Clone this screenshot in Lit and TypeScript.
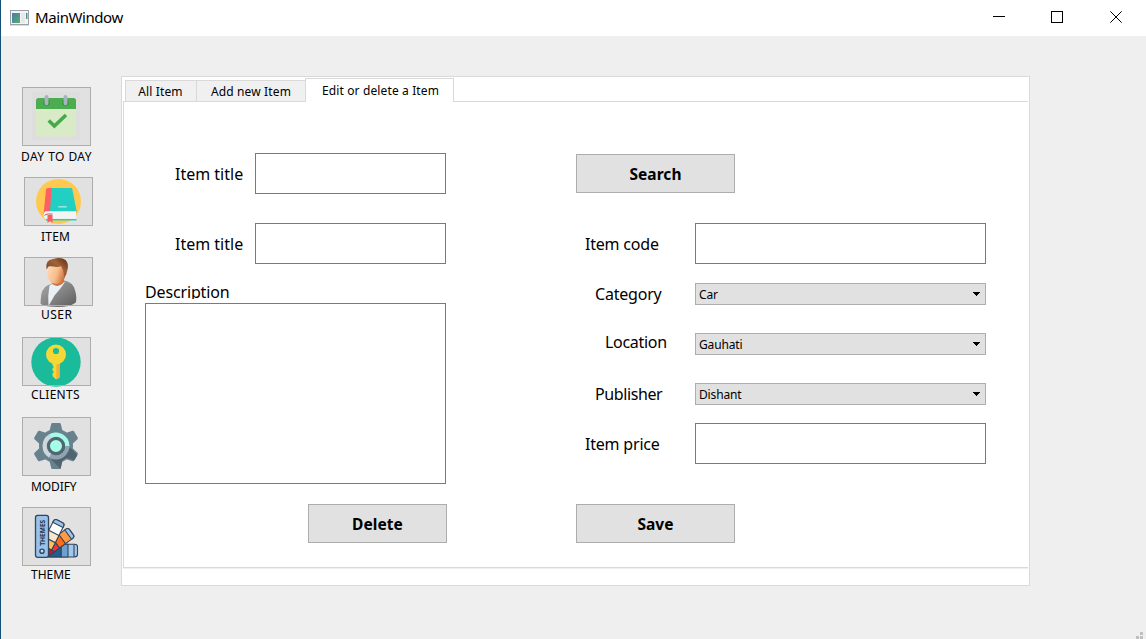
import { LitElement, html, svg, css } from "lit";
import { customElement, property } from "lit/decorators.js";

const dayIcon = svg`
  <rect x="32" y="92" width="48" height="48" fill="#dedede"/>
  <path d="M36 104h40v30.500q0 2-2 2H38q-2 0-2-2z" fill="#d9ebc6"/>
  <path d="M36 109v-8.500q0-2.500 2.500-2.500h35q2.500 0 2.500 2.500v8.500z" fill="#4bad50"/>
  <circle cx="46.500" cy="102.500" r="3.200" fill="#398e3d"/><circle cx="65.500" cy="102.500" r="3.200" fill="#398e3d"/>
  <path d="M46.500 97v6.300M65.500 97v6.300" stroke="#a5b4bd" stroke-width="4" stroke-linecap="round"/>
  <path d="M48.700 120.500l5.700 5.600L66 115" fill="none" stroke="#46a84b" stroke-width="3.500"/>`;

const itemIcon = svg`
  <circle cx="58.500" cy="201.500" r="22.500" fill="#ffc84f"/>
  <path d="M47.500 188H71q1 0 1.300 1.300L76.800 212H48z" fill="#21d0c3"/>
  <path d="M48 188h3.700L50 211l-6.500 4L46 190q.2-2 2-2z" fill="#ff5e65"/>
  <path d="M45.500 211.300H76v8H46q-2.500-1-2.500-4t2-4z" fill="#f5f4f4"/>
  <path d="M49 211.500H76.300" stroke="#ddd" stroke-width="1"/>
  <path d="M46 219.700h30.500" stroke="#21cfc2" stroke-width="1.500"/>
  <path d="M47.500 215h5v8l-2.500-2-2.500 2z" fill="#ff5a62"/>
  <path d="M44.500 215.500q1-1.500 4-1.500h4" stroke="#c9545d" stroke-width="1" fill="none"/>
  <path d="M58.300 206.800h8.500" stroke="#9debe4" stroke-width="1.400"/>`;

const userIcon = svg`
  <defs>
    <linearGradient id="suit" x1="0" x2="1" y1="0" y2="1"><stop offset="0" stop-color="#aaa"/><stop offset=".5" stop-color="#858585"/><stop offset="1" stop-color="#5c5c5c"/></linearGradient>
    <linearGradient id="skin" x1="0" x2="1" y1=".2" y2=".6"><stop offset="0" stop-color="#ffdcb8"/><stop offset=".55" stop-color="#f7bd8c"/><stop offset="1" stop-color="#c96c38"/></linearGradient>
    <linearGradient id="hair" x1="0" x2="1" y1="1" y2="0"><stop offset="0" stop-color="#6c3516"/><stop offset=".6" stop-color="#a0623a"/><stop offset="1" stop-color="#5a2a10"/></linearGradient>
  </defs>
  <path d="M40.600 301q.2-13 7.500-16l16-4.500q9 1.500 11 10 2 7 .7 12Q70 307 58 307q-13 0-17.400-3z" fill="url(#suit)"/>
  <path d="M49.500 285.500l3-1.500 12.500-2-5 7-5.500 6.500L48.500 306q-1-10 1-20.500z" fill="#e9f1f4"/>
  <path d="M51.500 278h12.500v3.800q-2.500 3.700-7 4.200-3.500-.3-5.500-3z" fill="#cc7341"/>
  <ellipse cx="56.300" cy="273.500" rx="9.200" ry="10.600" fill="url(#skin)"/>
  <path d="M46.500 269.500q-1.800-9.500 6.500-10.500 8-2.500 12.500 1 3.500 3.500 2 9.500-.5 4.500-3 8l-1.200-6.500-2-4.800q-4 1.300-8 .4-3-.8-4.800-.2z" fill="url(#hair)"/>`;

const keyIcon = svg`
  <circle cx="56" cy="362" r="24.700" fill="#1abb9b"/>
  <path d="M52.500 360h7v17.500l-3.500 2-3.500-3.500v-2.500l1.500-1.500-1.500-1.500v-2l1.500-1.500-1.500-1.500z" fill="#f5d836"/>
  <path d="M56.300 363h3.300v14.500l-3.300 2z" fill="#f3b23a"/>
  <path fill-rule="evenodd" d="M56 344.500a10 10 0 1 1 0 20 10 10 0 0 1 0-20zm0 3.400a3.100 3.100 0 1 0 0 6.200 3.100 3.100 0 0 0 0-6.200z" fill="#f5d836"/>`;

const gearIcon = svg`
  <g fill="#68828d">
    <circle cx="56" cy="446" r="17"/>
    ${[0, 60, 120, 180, 240, 300].map(
      (a) => svg`<path transform="rotate(${a} 56 446)" d="M49 433l2.200-9q.2-1 1.200-1h7.200q1 0 1.200 1l2.200 9z"/>`,
    )}
  </g>
  <path d="M51 459l9.500 10 1.800-8.500 4.500-2.600 7.500 2.400 3-5-5.500-6.300L65 446z" fill="#50656f"/>
  <circle cx="56" cy="446" r="11.300" fill="none" stroke="#8fa4ae" stroke-width="4.200"/>
  <path d="M50 455.600A11.300 11.300 0 0 1 50 436.400" fill="none" stroke="#ced7dc" stroke-width="4.200"/>
  <path d="M50 436.400A11.300 11.300 0 0 1 67.300 446" fill="none" stroke="#a5f9e8" stroke-width="4.200"/>
  <circle cx="56" cy="446" r="7.500" fill="#a5fce9" stroke="#526671" stroke-width="3"/>`;

const themeIcon = svg`
  <g stroke="#33445b" stroke-width="1.100" stroke-linejoin="round">
    <g>
      <path d="M49 544.300h25.500q3 0 3 2.500v7.500q0 2.700-3 2.700H49z" fill="#a2c8ec"/>
      <path d="M61 544.300h7v12.700h-7z" fill="#6d9fd0"/>
      <path d="M49 544.300h12v12.700H49z" fill="#1c5f93"/>
      <path d="M74 544.500v12.500" />
    </g>
    <g transform="rotate(-36 48.500 556)">
      <path d="M48.500 544.500h29.500q3 0 3 2.500v6.500q0 2.500-3 2.500H48.500z" fill="#ff9b42"/>
      <path d="M62 544.500h7.500V556H62z" fill="#ff6c16"/>
      <path d="M48.500 544.500H62V556H48.500z" fill="#ee3440"/>
      <path d="M77 544.500h1q3 0 3 2.500v6.500q0 2.500-3 2.500h-1z" fill="#9cc5ee"/>
    </g>
    <g transform="rotate(-63 48.500 556)">
      <path d="M48.500 544.500h33q3 0 3 2.500v6.500q0 2.500-3 2.500H48.500z" fill="#fff"/>
      <path d="M63.500 544.500h8V556h-8z" fill="#f7e7cb"/>
      <path d="M48.500 544.500h15V556h-15z" fill="#ffc25a"/>
      <path d="M80.500 544.500h1q3 0 3 2.500v6.500q0 2.500-3 2.500h-1z" fill="#9cc5ee"/>
    </g>
    <path d="M48 557v-9l6.500 3.800z" fill="#b51f31"/>
    <rect x="35.500" y="515.300" width="13" height="42" rx="2.200" fill="#99c2ea" stroke-width="1.300"/>
    <circle cx="42" cy="551.200" r="2.100" fill="#c4def5" stroke-width="1.400"/>
  </g>
  <text transform="translate(44.900 545.800) rotate(-90)" textLength="26" lengthAdjust="spacingAndGlyphs" font-size="7.600" font-weight="700" font-family="Noto Sans, sans-serif" fill="#26364d">THEMES</text>`;

interface NavEntry {
  name: string;
  label: string;
  view: string;
  art: unknown;
}

const NAV: NavEntry[] = [
  { name: "day", label: "DAY TO DAY", view: "22 87 69 59", art: dayIcon },
  { name: "item", label: "ITEM", view: "24 177 69 49", art: itemIcon },
  { name: "user", label: "USER", view: "24 257 69 49", art: userIcon },
  { name: "clients", label: "CLIENTS", view: "22 337 69 49", art: keyIcon },
  { name: "modify", label: "MODIFY", view: "22 417 69 59", art: gearIcon },
  { name: "theme", label: "THEME", view: "22 507 69 59", art: themeIcon },
];

@customElement("window-bar")
export class WindowBar extends LitElement {
  @property() heading = "";

  static styles = css`
    :host { display: flex; align-items: center; height: 36px; background: #fff; padding-left: 9px; box-sizing: border-box; }
    .title { flex: 1; margin-left: 6px; padding-bottom: 2px; font: 15px/20px "Noto Sans", sans-serif; letter-spacing: -0.42px; }
    .logo, .controls { display: block; }
    .logo { margin-bottom: 1px; }
  `;

  render() {
    return html`
      <svg class="logo" width="19" height="16" viewBox="0 0 19 16">
        <defs><linearGradient id="lg" x1="0" y1="0" x2="1" y2="1"><stop offset="0" stop-color="#4c78a8"/><stop offset="1" stop-color="#54b070"/></linearGradient></defs>
        <rect x=".5" y=".5" width="18" height="14" fill="#f3f3f3" stroke="#9aa0a8"/>
        <path d="M0 15.500h19" stroke="#ddd"/>
        <rect x="2" y="3" width="8" height="10" fill="url(#lg)"/>
        <path d="M11 3h4v10h-4z" fill="#e8e8e8"/>
        <rect x="16" y="3" width="1.500" height="6" fill="url(#lg)"/>
      </svg>
      <span class="title">${this.heading}</span>
      <svg class="controls" width="154" height="36" viewBox="992 0 154 36" fill="none" stroke="#000">
        <path d="M993 16.500h12"/>
        <rect x="1051.500" y="11.500" width="11" height="11"/>
        <path d="M1110.300 11.300l11.400 11.400M1121.700 11.300l-11.400 11.400"/>
      </svg>`;
  }
}

@customElement("combo-box")
export class ComboBox extends LitElement {
  @property() value = "";

  static styles = css`
    :host { display: flex; justify-content: space-between; align-items: center; box-sizing: border-box; width: 291px; height: 22px;
      border: 1px solid #adadad; background: #e1e1e1; padding: 0 5px 0 3px; font-size: 12px; line-height: 20px; letter-spacing: -0.15px; }
    .value { padding-top: 1px; }
  `;

  render() {
    return html`<span class="value">${this.value}</span>
      <svg width="7" height="4" viewBox="0 0 7 4" shape-rendering="crispEdges"><path d="M0 0h7v1H6v1H5v1H4v1H3V3H2V2H1V1H0z"/></svg>`;
  }
}

@customElement("app-root")
export class AppRoot extends LitElement {
  static styles = css`
    :host { display: flex; flex-direction: column; width: 1146px; height: 639px; box-sizing: border-box; overflow: hidden;
      position: relative; border-left: 1px solid #14507a; background: #efefef; color: #000; font-family: "Noto Sans", sans-serif; }
    .body { display: flex; flex: 1; }
    .nav { width: 120px; padding-top: 51px; }
    .entry { height: 80px; padding-left: 21px; }
    .entry.day, .entry.modify, .entry.theme { height: 90px; }
    .entry.item, .entry.user { padding-left: 23px; }
    .tile { display: block; width: 69px; height: 49px; padding: 0; border: 0; background: #e1e1e1; outline: 1px solid #adadad; outline-offset: -1px; }
    .day .tile, .modify .tile, .theme .tile { height: 59px; }
    .tile svg { display: block; width: 100%; height: 100%; overflow: visible; }
    .caption { display: block; font-size: 12px; line-height: 16px; white-space: nowrap; margin-left: 9px; }
    .day .caption { margin: 3px 0 0 -1px; letter-spacing: 0.44px; }
    .item .caption { margin: 3px 0 0 17px; letter-spacing: 0.2px; }
    .user .caption { margin: 1px 0 0 17px; letter-spacing: 0.5px; }
    .clients .caption { margin-top: 1px; letter-spacing: 0.25px; }
    .modify .caption { margin-top: 3px; letter-spacing: -0.1px; }
    .theme .caption { margin-top: 1px; }

    .frame { width: 909px; height: 510px; margin-top: 40px; box-sizing: border-box; border: 1px solid #d9d9d9; background: #fff; padding: 1px 1px 0; }
    .tabs { display: flex; align-items: flex-end; height: 23px; padding-left: 2px; }
    .tab { box-sizing: border-box; height: 21px; width: 71px; border: 1px solid #d9d9d9; border-right: 0; border-bottom: 0; background: #f0f0f0;
      font-size: 12px; line-height: 21px; text-align: center; letter-spacing: 0.13px; white-space: nowrap; padding-right: 1px; }
    .tab.add { width: 109px; padding-right: 0; }
    .tab.on { height: 24px; width: 149px; margin-bottom: -1px; border-right: 1px solid #d9d9d9; background: #fff; line-height: 23px; padding: 0 0 0 2px; z-index: 1; }
    .pane { display: flex; box-sizing: border-box; height: 467px; border: 1px solid #d9d9d9; border-right: 0; box-shadow: 0 1px #efefef; padding-top: 50px; }

    .left { width: 323px; padding-left: 21px; box-sizing: border-box; }
    .right { width: 410px; margin-left: 129px; }
    .row { display: flex; align-items: center; }
    .label { font-size: 16px; line-height: 20px; white-space: nowrap; letter-spacing: -0.2px; }
    .field { box-sizing: border-box; height: 41px; border: 1px solid #7a7a7a; background: #fff; }
    .left .row { padding-left: 30px; margin: 1px 0 29px; height: 41px; }
    .left .row .label { width: 80px; letter-spacing: 0; }
    .left .row .field { width: 191px; }
    .left .desc { display: block; height: 16px; margin-top: -10px; line-height: 19px; overflow: hidden; letter-spacing: -0.15px; }
    .memo { box-sizing: border-box; width: 301px; height: 181px; border: 1px solid #7a7a7a; margin-top: 4px; }
    .push { display: block; box-sizing: border-box; width: 159px; height: 39px; padding: 1px 0 0; border: 1px solid #adadad; background: #e1e1e1;
      color: #000; font: bold 15.500px/20px "Noto Sans", sans-serif; letter-spacing: 0.05px; }
    .push.delete { width: 139px; margin: 20px 0 0 163px; }
    .push.search { margin-top: 2px; }
    .push.save { margin-top: 40px; }
    .right .row { width: 410px; height: 41px; box-sizing: border-box; justify-content: space-between; padding-left: 9px; }
    .right .code { margin-top: 30px; }
    .right .row .field { width: 291px; }
    .right .pick { height: 22px; margin-top: 28px; padding-left: 19px; }
    .right .category { margin-top: 19px; }
    .right .location { padding-left: 29px; }
    .right .location .label { margin-top: -4px; letter-spacing: -0.3px; }
    .right .publisher .label { letter-spacing: -0.4px; }
    .right .price { margin-top: 18px; }
    .grip { position: absolute; right: 3px; bottom: 0; display: block; }
  `;

  render() {
    return html`
      <window-bar heading="MainWindow"></window-bar>
      <div class="body">
        <nav class="nav">
          ${NAV.map(
            (n) => html`<div class="entry ${n.name}">
              <button class="tile" aria-label=${n.label}><svg viewBox=${n.view}>${n.art}</svg></button>
              <span class="caption">${n.label}</span>
            </div>`,
          )}
        </nav>
        <main class="frame">
          <div class="tabs">
            <div class="tab">All Item</div>
            <div class="tab add">Add new Item</div>
            <div class="tab on">Edit or delete a Item</div>
          </div>
          <section class="pane">
            <div class="left">
              <div class="row"><span class="label">Item title</span><div class="field"></div></div>
              <div class="row"><span class="label">Item title</span><div class="field"></div></div>
              <span class="label desc">Description</span>
              <div class="memo"></div>
              <button class="push delete">Delete</button>
            </div>
            <div class="right">
              <button class="push search">Search</button>
              <div class="row code"><span class="label">Item code</span><div class="field"></div></div>
              <div class="row pick category"><span class="label">Category</span><combo-box value="Car"></combo-box></div>
              <div class="row pick location"><span class="label">Location</span><combo-box value="Gauhati"></combo-box></div>
              <div class="row pick publisher"><span class="label">Publisher</span><combo-box value="Dishant"></combo-box></div>
              <div class="row price"><span class="label">Item price</span><div class="field"></div></div>
              <button class="push save">Save</button>
            </div>
          </section>
        </main>
      </div>
      <svg class="grip" width="7" height="7" viewBox="0 0 7 7" fill="#bfbfbf"><path d="M4 0h3v3H4zM0 4h3v3H0zM4 4h3v3H4z"/></svg>`;
  }
}
